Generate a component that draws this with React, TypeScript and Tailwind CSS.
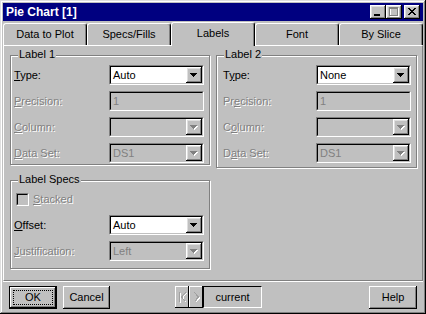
import React from 'react';

const raised =
  'shadow-[inset_-1px_-1px_0_#000,inset_1px_1px_0_#fff,inset_-2px_-2px_0_#808080,inset_2px_2px_0_#dfdfdf]';
const dis = 'text-[#808080] [text-shadow:1px_1px_0_#fff]';

const Arrow = ({ disabled }: { disabled?: boolean }) => (
  <svg width="8" height="5" viewBox="0 0 8 5" shapeRendering="crispEdges">
    {disabled && (
      <g fill="#fff">
        <rect x="1" y="1" width="7" height="1" />
        <rect x="2" y="2" width="5" height="1" />
        <rect x="3" y="3" width="3" height="1" />
        <rect x="4" y="4" width="1" height="1" />
      </g>
    )}
    <g fill={disabled ? '#808080' : '#000'}>
      <rect x="0" y="0" width="7" height="1" />
      <rect x="1" y="1" width="5" height="1" />
      <rect x="2" y="2" width="3" height="1" />
      <rect x="3" y="3" width="1" height="1" />
    </g>
  </svg>
);

const Sunken = ({ children, disabled }: { children: React.ReactNode; disabled?: boolean }) => (
  <div className="w-[95px] h-[20px] border border-t-[#808080] border-l-[#808080] border-b-white border-r-white">
    <div
      className={`h-full flex border border-t-black border-l-black border-b-[#c0c0c0] border-r-[#c0c0c0] ${
        disabled ? 'bg-[#c0c0c0]' : 'bg-white'
      }`}
    >
      {children}
    </div>
  </div>
);

const Combo = ({ value, disabled }: { value: string; disabled?: boolean }) => (
  <Sunken disabled={disabled}>
    <span className={`flex-1 pl-[2px] leading-[16px] ${disabled ? 'text-[#808080]' : 'text-black'}`}>{value}</span>
    <div className={`w-[16px] h-[16px] bg-[#c0c0c0] ${raised} flex items-center justify-center`}>
      <Arrow disabled={disabled} />
    </div>
  </Sunken>
);

const Field = ({ value }: { value: string }) => (
  <Sunken disabled>
    <span className="flex-1 pl-[2px] leading-[16px] text-[#808080]">{value}</span>
  </Sunken>
);

// label text with one underlined mnemonic letter
const Mn = ({ pre = '', u, post }: { pre?: string; u: string; post: string }) => (
  <span>
    {pre}
    <span className="underline underline-offset-[1px]">{u}</span>
    {post}
  </span>
);

const Row = ({ label, disabled, children }: { label: React.ReactNode; disabled?: boolean; children: React.ReactNode }) => (
  <div className="flex items-center justify-between h-[20px]">
    <span className={disabled ? dis : 'text-black'}>{label}</span>
    {children}
  </div>
);

const Group = ({ title, className, children }: { title: string; className: string; children: React.ReactNode }) => (
  <div
    className={`relative border border-[#808080] shadow-[inset_1px_1px_0_#fff,1px_1px_0_#fff] ${className}`}
  >
    <span className="absolute left-[7px] -top-[8px] px-[1px] leading-[13px] bg-[#c0c0c0] text-black">{title}</span>
    {children}
  </div>
);

const Tab = ({ label, active }: { label: string; active?: boolean }) => (
  <div
    className={`w-[84px] shrink-0 flex items-center justify-center bg-[#c0c0c0] border-l border-t border-r border-l-white border-t-white border-r-black rounded-t-[3px] shadow-[inset_-1px_0_0_#808080] ${
      active ? 'h-[24px] -mb-[1px] relative z-10 pb-[2px]' : 'h-[22px]'
    }`}
  >
    {label}
  </div>
);

const TitleBtn = ({ children }: { children: React.ReactNode }) => (
  <div className={`w-[16px] h-[14px] bg-[#c0c0c0] ${raised} flex items-center justify-center`}>{children}</div>
);

const Btn = ({ label, className = '' }: { label: string; className?: string }) => (
  <div
    className={`h-[23px] flex items-center justify-center bg-[#c0c0c0] shadow-[inset_-1px_-1px_0_#000,inset_1px_1px_0_#fff,inset_-2px_-2px_0_#808080] ${className}`}
  >
    {label}
  </div>
);

export default function App() {
  return (
    <div className="w-[426px] h-[314px] bg-[#c0c0c0] p-[3px] flex flex-col font-['Liberation_Sans',Arial,sans-serif] text-[11px] text-black shadow-[inset_-1px_-1px_0_#000,inset_1px_1px_0_#dfdfdf,inset_-2px_-2px_0_#808080,inset_2px_2px_0_#fff]">
      {/* title bar */}
      <div className="h-[18px] shrink-0 bg-[#000080] flex items-center justify-between pl-[3px] pr-[3px]">
        <span className="text-white font-bold text-[12px] leading-[18px]">Pie Chart [1]</span>
        <div className="flex items-center">
          <TitleBtn>
            <svg width="16" height="14" shapeRendering="crispEdges">
              <rect x="4" y="9" width="6" height="2" fill="#000" />
            </svg>
          </TitleBtn>
          <TitleBtn>
            <svg width="16" height="14" shapeRendering="crispEdges">
              <g fill="none" stroke="#fff">
                <rect x="4.5" y="3.5" width="8" height="8" />
              </g>
              <rect x="4" y="3" width="8" height="1" fill="#fff" />
              <g fill="none" stroke="#808080">
                <rect x="3.5" y="2.5" width="8" height="8" />
              </g>
              <rect x="3" y="3" width="9" height="1" fill="#808080" />
            </svg>
          </TitleBtn>
          <div className="w-[2px]" />
          <TitleBtn>
            <svg width="16" height="14" shapeRendering="crispEdges">
              <g fill="#000">
                {[0, 1, 2, 3, 4, 5, 6].map((i) => (
                  <React.Fragment key={i}>
                    <rect x={4 + i} y={3 + i} width="2" height="1" />
                    <rect x={10 - i} y={3 + i} width="2" height="1" />
                  </React.Fragment>
                ))}
              </g>
            </svg>
          </TitleBtn>
        </div>
      </div>

      {/* tabs */}
      <div className="h-[24px] shrink-0 flex items-end">
        <Tab label="Data to Plot" />
        <Tab label="Specs/Fills" />
        <Tab label="Labels" active />
        <Tab label="Font" />
        <Tab label="By Slice" />
      </div>

      {/* tab panel */}
      <div className="h-[236px] shrink-0 border border-t-white border-l-white border-r-[#808080] border-b-[#808080] shadow-[0_1px_0_#fff] pl-[6px] pt-[9px] flex gap-[6px]">
        <div className="flex flex-col w-[200px]">
          <Group title="Label 1" className="h-[110px] pt-[9px] pl-[3px] pr-[5px] flex flex-col gap-[6px]">
            <Row label={<Mn u="T" post="ype:" />}>
              <Combo value="Auto" />
            </Row>
            <Row disabled label={<Mn u="P" post="recision:" />}>
              <Field value="1" />
            </Row>
            <Row disabled label={<Mn u="C" post="olumn:" />}>
              <Combo value="" disabled />
            </Row>
            <Row disabled label={<Mn u="D" post="ata Set:" />}>
              <Combo value="DS1" disabled />
            </Row>
          </Group>
          <Group title="Label Specs" className="mt-[15px] h-[89px] pt-[8px] pl-[3px] pr-[5px] flex flex-col gap-[6px]">
            <div className="flex items-center h-[20px] pl-[2px]">
              <div className="w-[13px] h-[13px] border border-t-[#808080] border-l-[#808080] border-b-white border-r-white">
                <div className="w-full h-full bg-[#c0c0c0] border border-t-black border-l-black border-b-[#c0c0c0] border-r-[#c0c0c0]" />
              </div>
              <span className={`ml-[4px] ${dis}`}>
                <Mn u="S" post="tacked" />
              </span>
            </div>
            <Row label={<Mn u="O" post="ffset:" />}>
              <Combo value="Auto" />
            </Row>
            <Row disabled label={<Mn u="J" post="ustification:" />}>
              <Combo value="Left" disabled />
            </Row>
          </Group>
        </div>
        <div className="w-[201px]">
          <Group title="Label 2" className="h-[113px] pt-[9px] pl-[6px] pr-[5px] flex flex-col gap-[6px]">
            <Row label={<Mn pre="T" u="y" post="pe:" />}>
              <Combo value="None" />
            </Row>
            <Row disabled label={<Mn pre="Pr" u="e" post="cision:" />}>
              <Field value="1" />
            </Row>
            <Row disabled label={<Mn pre="C" u="o" post="lumn:" />}>
              <Combo value="" disabled />
            </Row>
            <Row disabled label={<Mn pre="D" u="a" post="ta Set:" />}>
              <Combo value="DS1" disabled />
            </Row>
          </Group>
        </div>
      </div>

      {/* button row */}
      <div className="flex items-start pt-[5px] pl-[6px] pr-[6px]">
        <div className="relative w-[48px] h-[23px] border border-black">
          <Btn label="OK" className="h-full w-full" />
          <div className="absolute inset-[3px] border border-dotted border-black" />
        </div>
        <Btn label="Cancel" className="w-[47px] ml-[6px]" />
        <div className="ml-[65px] flex h-[22px]">
          <div className="w-[14px] h-full bg-[#c0c0c0] shadow-[inset_-1px_-1px_0_#000,inset_1px_1px_0_#fff]">
            <svg width="14" height="22" shapeRendering="crispEdges">
              <g fill="none" stroke="#fff">
                <path d="M5.5 7v10M11.5 7.5l-4 4.5 4 4.5" />
              </g>
              <g fill="none" stroke="#a0a0a0">
                <path d="M4.5 6v10M10.5 6.5l-4 4.5 4 4.5" />
              </g>
            </svg>
          </div>
          <div className="w-[14px] h-full bg-[#c0c0c0] shadow-[inset_-1px_-1px_0_#000,inset_1px_1px_0_#fff]">
            <svg width="14" height="22" shapeRendering="crispEdges">
              <path d="M6.5 7.5l4 4.5-4 4.5" fill="none" stroke="#fff" />
              <path d="M5.5 6.5l4 4.5-4 4.5" fill="none" stroke="#a0a0a0" />
            </svg>
          </div>
          <div className="w-[59px] h-full flex items-center justify-center border border-t-black border-l-black border-r-white border-b-white">
            current
          </div>
        </div>
        <Btn label="Help" className="w-[48px] ml-auto" />
      </div>
    </div>
  );
}
